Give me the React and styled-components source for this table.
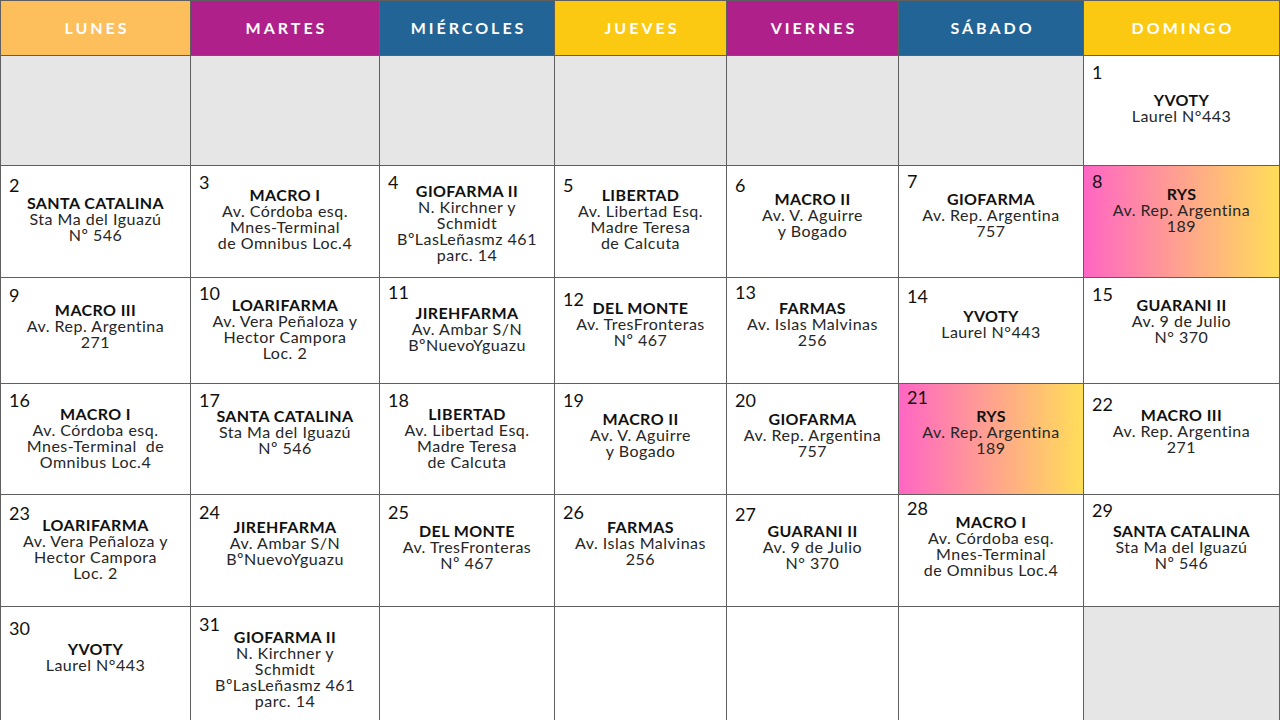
import React from 'react';
import styled, { createGlobalStyle } from 'styled-components';

const GlobalStyle = createGlobalStyle`
  html, body {
    margin: 0;
    padding: 0;
    background: #ffffff;
    overflow: hidden;
  }
  * { box-sizing: border-box; }
`;

const days = [
  { name: 'LUNES', color: '#fdbe5c' },
  { name: 'MARTES', color: '#b0208b' },
  { name: 'MIÉRCOLES', color: '#226496' },
  { name: 'JUEVES', color: '#fcc912' },
  { name: 'VIERNES', color: '#b0208b' },
  { name: 'SÁBADO', color: '#226496' },
  { name: 'DOMINGO', color: '#fcc912' },
];

// numTop / infoTop: how far the day number and the text block sit from the cell top
const weeks = [
  [
    { kind: 'empty' }, { kind: 'empty' }, { kind: 'empty' }, { kind: 'empty' },
    { kind: 'empty' }, { kind: 'empty' },
    { day: 1, numTop: 6, infoTop: 36, title: 'YVOTY', lines: ['Laurel N°443'] },
  ],
  [
    { day: 2, numTop: 9, infoTop: 29, title: 'SANTA CATALINA', lines: ['Sta Ma del Iguazú', 'Nº 546'] },
    { day: 3, numTop: 6, infoTop: 21, title: 'MACRO I', lines: ['Av. Córdoba esq.', 'Mnes-Terminal', 'de Omnibus Loc.4'] },
    { day: 4, numTop: 6, infoTop: 17, title: 'GIOFARMA II', lines: ['N. Kirchner y', 'Schmidt', 'BºLasLeñasmz 461', 'parc. 14'] },
    { day: 5, numTop: 9, infoTop: 21, title: 'LIBERTAD', lines: ['Av. Libertad Esq.', 'Madre Teresa', 'de Calcuta'] },
    { day: 6, numTop: 9, infoTop: 25, title: 'MACRO II', lines: ['Av. V. Aguirre', 'y Bogado'] },
    { day: 7, numTop: 5, infoTop: 25, title: 'GIOFARMA', lines: ['Av. Rep. Argentina', '757'] },
    { day: 8, numTop: 5, infoTop: 20, title: 'RYS', lines: ['Av. Rep. Argentina', '189'], kind: 'rys' },
  ],
  [
    { day: 9, numTop: 7, infoTop: 24, title: 'MACRO III', lines: ['Av. Rep. Argentina', '271'] },
    { day: 10, numTop: 5, infoTop: 19, title: 'LOARIFARMA', lines: ['Av. Vera Peñaloza y', 'Hector Campora', 'Loc. 2'] },
    { day: 11, numTop: 4, infoTop: 27, title: 'JIREHFARMA', lines: ['Av. Ambar S/N', 'BºNuevoYguazu'] },
    { day: 12, numTop: 11, infoTop: 22, title: 'DEL MONTE', lines: ['Av. TresFronteras', 'Nº 467'] },
    { day: 13, numTop: 4, infoTop: 22, title: 'FARMAS', lines: ['Av. Islas Malvinas', '256'] },
    { day: 14, numTop: 8, infoTop: 30, title: 'YVOTY', lines: ['Laurel N°443'] },
    { day: 15, numTop: 6, infoTop: 19, title: 'GUARANI II', lines: ['Av. 9 de Julio', 'N° 370'] },
  ],
  [
    { day: 16, numTop: 6, infoTop: 22, title: 'MACRO I', lines: ['Av. Córdoba esq.', 'Mnes-Terminal  de', 'Omnibus Loc.4'] },
    { day: 17, numTop: 6, infoTop: 24, title: 'SANTA CATALINA', lines: ['Sta Ma del Iguazú', 'Nº 546'] },
    { day: 18, numTop: 6, infoTop: 22, title: 'LIBERTAD', lines: ['Av. Libertad Esq.', 'Madre Teresa', 'de Calcuta'] },
    { day: 19, numTop: 6, infoTop: 27, title: 'MACRO II', lines: ['Av. V. Aguirre', 'y Bogado'] },
    { day: 20, numTop: 6, infoTop: 27, title: 'GIOFARMA', lines: ['Av. Rep. Argentina', '757'] },
    { day: 21, numTop: 3, infoTop: 24, title: 'RYS', lines: ['Av. Rep. Argentina', '189'], kind: 'rys' },
    { day: 22, numTop: 10, infoTop: 23, title: 'MACRO III', lines: ['Av. Rep. Argentina', '271'] },
  ],
  [
    { day: 23, numTop: 8, infoTop: 22, title: 'LOARIFARMA', lines: ['Av. Vera Peñaloza y', 'Hector Campora', 'Loc. 2'] },
    { day: 24, numTop: 7, infoTop: 24, title: 'JIREHFARMA', lines: ['Av. Ambar S/N', 'BºNuevoYguazu'] },
    { day: 25, numTop: 7, infoTop: 28, title: 'DEL MONTE', lines: ['Av. TresFronteras', 'Nº 467'] },
    { day: 26, numTop: 7, infoTop: 24, title: 'FARMAS', lines: ['Av. Islas Malvinas', '256'] },
    { day: 27, numTop: 9, infoTop: 28, title: 'GUARANI II', lines: ['Av. 9 de Julio', 'N° 370'] },
    { day: 28, numTop: 3, infoTop: 19, title: 'MACRO I', lines: ['Av. Córdoba esq.', 'Mnes-Terminal', 'de Omnibus Loc.4'] },
    { day: 29, numTop: 5, infoTop: 28, title: 'SANTA CATALINA', lines: ['Sta Ma del Iguazú', 'Nº 546'] },
  ],
  [
    { day: 30, numTop: 11, infoTop: 34, title: 'YVOTY', lines: ['Laurel N°443'] },
    { day: 31, numTop: 7, infoTop: 22, title: 'GIOFARMA II', lines: ['N. Kirchner y', 'Schmidt', 'BºLasLeñasmz 461', 'parc. 14'] },
    { kind: 'blank' }, { kind: 'blank' }, { kind: 'blank' }, { kind: 'blank' },
    { kind: 'empty' },
  ],
];

const Calendar = styled.div`
  width: 1280px;
  height: 720px;
  display: grid;
  grid-template-columns: 189px 188px 174px 171px 171px 184px 195px;
  grid-template-rows: 54px 109px 111px 105px 110px 111px 113px;
  gap: 1px;
  padding: 1px 1px 0 1px;
  background: #5f5f5f;
  font-family: Lato, 'Open Sans', sans-serif;
`;

const HeaderCell = styled.div`
  background: ${p => p.color};
  display: flex;
  align-items: center;
  justify-content: center;
  color: #ffffff;
  font-size: 16px;
  font-weight: 700;
  letter-spacing: 3px;
  padding: 0 0 2px 3px;
`;

const Cell = styled.div`
  display: grid;
  grid-template-columns: 1fr;
  grid-template-rows: 1fr;
  overflow: hidden;
  background: ${p =>
    p.kind === 'empty'
      ? '#e6e6e6'
      : p.kind === 'rys'
      ? 'linear-gradient(90deg, #ff66c4 0%, #ffde59 100%)'
      : '#ffffff'};

  & > * {
    grid-area: 1 / 1;
  }
`;

const DayNum = styled.div`
  align-self: start;
  justify-self: start;
  margin: ${p => p.top}px 0 0 8px;
  font-size: 18px;
  line-height: 20px;
  color: #111111;
`;

const Info = styled.div`
  align-self: start;
  justify-self: center;
  margin-top: ${p => p.top}px;
  text-align: center;
  line-height: 16px;
`;

const Title = styled.div`
  font-size: 16px;
  font-weight: 700;
  letter-spacing: 0.4px;
  color: #111111;
`;

const Line = styled.div`
  font-size: 16px;
  font-weight: 400;
  letter-spacing: 0.5px;
  color: #262626;
  white-space: pre;
`;

function DayCell({ cell }) {
  if (!cell.day) return <Cell kind={cell.kind} />;
  return (
    <Cell kind={cell.kind}>
      <DayNum top={cell.numTop}>{cell.day}</DayNum>
      <Info top={cell.infoTop}>
        <Title>{cell.title}</Title>
        {cell.lines.map((l, i) => (
          <Line key={i}>{l}</Line>
        ))}
      </Info>
    </Cell>
  );
}

export default function App() {
  return (
    <>
      <GlobalStyle />
      <Calendar>
        {days.map(d => (
          <HeaderCell key={d.name} color={d.color}>{d.name}</HeaderCell>
        ))}
        {weeks.map((week, w) =>
          week.map((cell, i) => <DayCell key={`${w}-${i}`} cell={cell} />)
        )}
      </Calendar>
    </>
  );
}
